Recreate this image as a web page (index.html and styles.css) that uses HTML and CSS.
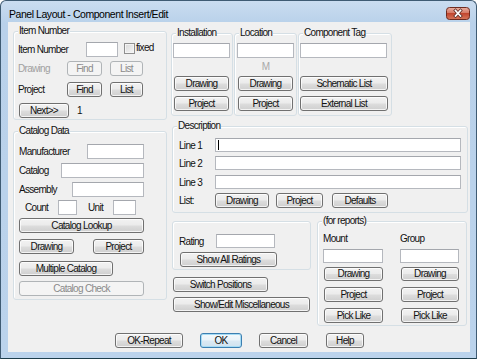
FILE: index.html
```html
<!DOCTYPE html>
<html>
<head>
<meta charset="utf-8">
<title>Panel Layout - Component Insert/Edit</title>
<link rel="stylesheet" href="styles.css">
</head>
<body>
<div class="window">
  <div class="titlebar">
    <span class="title">Panel Layout - Component Insert/Edit</span>
    <div class="close">
      <svg width="24" height="13" viewBox="0 0 24 13">
        <defs>
          <linearGradient id="cg" x1="0" y1="0" x2="0" y2="1">
            <stop offset="0" stop-color="#eab0a2"/>
            <stop offset="0.45" stop-color="#d57a66"/>
            <stop offset="0.5" stop-color="#c2462f"/>
            <stop offset="1" stop-color="#d7785c"/>
          </linearGradient>
        </defs>
        <rect x="0.5" y="0.5" width="23" height="12" rx="3" fill="url(#cg)" stroke="#6e2b20"/>
        <path d="M9.5 3.5 L14.5 9 M14.5 3.5 L9.5 9" stroke="#5a2a24" stroke-width="3.2" stroke-linecap="square"/>
        <path d="M9.5 3.5 L14.5 9 M14.5 3.5 L9.5 9" stroke="#ffffff" stroke-width="1.7" stroke-linecap="square"/>
      </svg>
    </div>
  </div>
  <div class="client">
    <div class="main">
      <div class="leftcol">
        <div class="group g-item">
          <span class="legend">Item Number</span>
          <div class="row ri1"><span class="lbl w68">Item Number</span><span class="tb w32"></span><span class="chk"></span><span class="fixed">fixed</span></div>
          <div class="row ri2"><span class="lbl dis w49">Drawing</span><button class="btn off w35">Find</button><button class="btn off w33 ml8">List</button></div>
          <div class="row ri3"><span class="lbl w49">Project</span><button class="btn w35">Find</button><button class="btn w33 ml8">List</button></div>
          <div class="row ri4"><button class="btn w50 ml1">Next&gt;&gt;</button><span class="num">1</span></div>
        </div>
        <div class="group g-cat">
          <span class="legend">Catalog Data</span>
          <div class="row rc1"><span class="lbl w68">Manufacturer</span><span class="tb w57"></span></div>
          <div class="row rc2"><span class="lbl w42">Catalog</span><span class="tb w83"></span></div>
          <div class="row rc3"><span class="lbl w53">Assembly</span><span class="tb w72"></span></div>
          <div class="row rc4"><span class="lbl w33 ml6">Count</span><span class="tb w19"></span><span class="lbl w25 ml11">Unit</span><span class="tb w23"></span></div>
          <div class="row rc5"><button class="btn w125">Catalog Lookup</button></div>
          <div class="row rc6"><button class="btn w55">Drawing</button><button class="btn w51 ml19">Project</button></div>
          <div class="row rc7"><button class="btn w94">Multiple Catalog</button></div>
          <div class="row rc8"><button class="btn off w125">Catalog Check</button></div>
        </div>
      </div>
      <div class="rightcol">
        <div class="toprow">
          <div class="group g-inst">
            <span class="legend">Installation</span>
            <div class="row rt1"><span class="tb w57"></span></div>
            <div class="mrow"></div>
            <div class="row"><button class="btn w55 ml1">Drawing</button></div>
            <div class="row rt4"><button class="btn w55 ml1">Project</button></div>
          </div>
          <div class="group g-loc">
            <span class="legend">Location</span>
            <div class="row rt1"><span class="tb w57"></span></div>
            <div class="mrow">M</div>
            <div class="row"><button class="btn w55 ml1">Drawing</button></div>
            <div class="row rt4"><button class="btn w55 ml1">Project</button></div>
          </div>
          <div class="group g-tag">
            <span class="legend">Component Tag</span>
            <div class="row rt1"><span class="tb w87"></span></div>
            <div class="mrow"></div>
            <div class="row"><button class="btn w88">Schematic List</button></div>
            <div class="row rt4"><button class="btn w88">External List</button></div>
          </div>
        </div>
        <div class="group g-desc">
          <span class="legend">Description</span>
          <div class="row rd1 h14"><span class="lbl w36">Line 1</span><span class="tb w246 h14"><span class="caret"></span></span></div>
          <div class="row rd2 h14"><span class="lbl w36">Line 2</span><span class="tb w246 h14"></span></div>
          <div class="row rd3 h14"><span class="lbl w36">Line 3</span><span class="tb w246 h14"></span></div>
          <div class="row rd4"><span class="lbl w36">List:</span><button class="btn w54">Drawing</button><button class="btn w47 ml7">Project</button><button class="btn w56 ml9">Defaults</button></div>
        </div>
        <div class="botrow">
          <div class="misccol">
            <div class="group g-rate">
              <div class="row rr1 h14"><span class="lbl w37">Rating</span><span class="tb w59 h14"></span></div>
              <div class="row rr2"><button class="btn w97 ml1">Show All Ratings</button></div>
            </div>
            <div class="row rs1"><button class="btn w95 ml1">Switch Positions</button></div>
            <div class="row rs2"><button class="btn w137 ml1">Show/Edit Miscellaneous</button></div>
          </div>
          <div class="group g-rep">
            <span class="legend">(for reports)</span>
            <div class="row rp1 h12"><span class="lbl w77">Mount</span><span class="lbl">Group</span></div>
            <div class="row rp2 h14"><span class="tb w60 h14"></span><span class="tb w59 h14 ml17"></span></div>
            <div class="row rp3 h14"><button class="btn w59 h14 ml1">Drawing</button><button class="btn w58 h14 ml18">Drawing</button></div>
            <div class="row rp4"><button class="btn w59 ml1">Project</button><button class="btn w58 ml18">Project</button></div>
            <div class="row rp5"><button class="btn w59 ml1">Pick Like</button><button class="btn w58 ml18">Pick Like</button></div>
          </div>
        </div>
      </div>
    </div>
    <div class="footer">
      <button class="btn w68">OK-Repeat</button>
      <button class="btn def w42 ml17">OK</button>
      <button class="btn w49 ml17">Cancel</button>
      <button class="btn w38 ml18">Help</button>
    </div>
  </div>
</div>
</body>
</html>
```

FILE: styles.css
```css
* { box-sizing: border-box; }
html, body { margin: 0; padding: 0; }
body {
  font-family: "Liberation Sans", Arial, sans-serif;
  font-size: 10px;
  letter-spacing: -0.7px;
  color: #111;
  background: #ffffff;
}
.window {
  width: 477px;
  height: 359px;
  border: 1px solid #3f5b73;
  border-bottom-color: #1d3d4b;
  border-radius: 6px 6px 0 0;
  background: linear-gradient(180deg, #cadcf0 0, #b9d1ea 22px, #bbd3ec 100%);
  padding: 0 6px 6px 7px;
  display: flex;
  flex-direction: column;
}
.titlebar {
  height: 21px;
  flex: none;
  position: relative;
  padding-top: 7px;
}
.title {
  display: block;
  font-size: 10.5px;
  letter-spacing: -0.45px;
  line-height: 12px;
  margin-left: 1px;
  white-space: nowrap;
  color: #000;
}
.close {
  position: absolute;
  right: 0;
  top: 6px;
  width: 24px;
  height: 13px;
}
.close svg { display: block; }
.client {
  flex: 1;
  background: #f0f0f0;
}
.main { display: flex; height: 311px; }
.leftcol { width: 154px; margin-left: 5px; padding-top: 9px; flex: none; }
.rightcol { width: 297px; margin-left: 4px; padding-top: 11px; flex: none; }

.group {
  position: relative;
  border: 1px solid #d5dfe5;
  border-radius: 3px;
  box-shadow: inset 1px 1px 0 #ffffff;
}
.legend {
  position: absolute;
  top: -7px;
  left: 4px;
  padding: 0 1px;
  line-height: 12px;
  background: #f0f0f0;
  white-space: nowrap;
}
.row { display: flex; align-items: center; height: 15px; }
.h14 { height: 14px; }
.h12 { height: 12px; }
.lbl { flex: none; white-space: nowrap; }
.dis { color: #a0a0a0; }

.tb {
  display: block;
  flex: none;
  height: 15px;
  background: #fff;
  border: 1px solid #b5b8be;
  border-top-color: #a4a7ad;
  position: relative;
}
.tb.h14 { height: 14px; }
.caret {
  position: absolute;
  left: 2px;
  top: 1px;
  width: 1px;
  height: 10px;
  background: #000;
}
.chk {
  display: block;
  flex: none;
  width: 11px;
  height: 11px;
  margin-left: 6px;
  align-self: flex-start;
  margin-top: 1px;
  border: 1px solid #8f8f8f;
  background: linear-gradient(135deg, #d9d9d9, #f6f6f6);
  box-shadow: inset 0 0 0 1px #f4f4f4;
}
.fixed { margin-left: 1px; align-self: flex-start; line-height: 12px; }
.num { margin-left: 8px; }

.btn {
  flex: none;
  display: block;
  height: 15px;
  padding: 0;
  margin: 0;
  font: inherit;
  letter-spacing: inherit;
  color: #111;
  line-height: 13px;
  text-align: center;
  white-space: nowrap;
  border: 1px solid #707070;
  border-radius: 3px;
  background: linear-gradient(180deg, #f2f2f2 0%, #ebebeb 48%, #dddddd 52%, #cfcfcf 100%);
  box-shadow: inset 0 0 0 1px rgba(255,255,255,0.75);
}
.btn.h14 { height: 14px; line-height: 12px; }
.btn.off {
  color: #8a8a8a;
  border-color: #b0b4b7;
  background: #f4f4f4;
  box-shadow: none;
}
.btn.def {
  border-color: #3c7fb1;
  background: linear-gradient(180deg, #f4f9fc 0%, #eaf3f9 48%, #dbe9f3 52%, #d0e2ef 100%);
  box-shadow: inset 0 0 0 1px #a6dcf5;
}

/* widths */
.w19 { width: 19px; } .w23 { width: 23px; } .w25 { width: 25px; }
.w32 { width: 32px; } .w33 { width: 33px; } .w35 { width: 35px; }
.w36 { width: 36px; } .w37 { width: 37px; } .w38 { width: 38px; }
.w42 { width: 42px; } .w47 { width: 47px; } .w49 { width: 49px; }
.w50 { width: 50px; } .w51 { width: 51px; } .w53 { width: 53px; }
.w54 { width: 54px; } .w55 { width: 55px; } .w56 { width: 56px; }
.w57 { width: 57px; } .w58 { width: 58px; } .w59 { width: 59px; }
.w60 { width: 60px; } .w68 { width: 68px; } .w72 { width: 72px; }
.w77 { width: 77px; } .w83 { width: 83px; } .w87 { width: 87px; }
.w88 { width: 88px; } .w94 { width: 94px; } .w95 { width: 95px; }
.w97 { width: 97px; } .w125 { width: 125px; } .w137 { width: 137px; }
.w246 { width: 246px; }
.ml1 { margin-left: 1px; } .ml6 { margin-left: 6px; } .ml7 { margin-left: 7px; }
.ml8 { margin-left: 8px; } .ml9 { margin-left: 9px; } .ml11 { margin-left: 11px; }
.ml17 { margin-left: 17px; } .ml18 { margin-left: 18px; } .ml19 { margin-left: 19px; }

/* Item Number group */
.g-item { height: 89px; padding-left: 4px; }
.ri1 { margin-top: 10px; }
.ri2 { margin-top: 4px; }
.ri3 { margin-top: 6px; }
.ri4 { margin-top: 6px; }

/* Catalog group */
.g-cat { height: 169px; margin-top: 11px; padding-left: 5px; }
.rc1 { margin-top: 12px; }
.rc2 { margin-top: 4px; }
.rc3 { margin-top: 4px; }
.rc4 { margin-top: 3px; }
.rc5 { margin-top: 3px; }
.rc6 { margin-top: 6px; }
.rc7 { margin-top: 7px; }
.rc8 { margin-top: 5px; }

/* top row */
.toprow { display: flex; height: 83px; }
.g-inst { width: 62px; padding-left: 1px; }
.g-loc { width: 63px; margin-left: 1px; padding-left: 2px; }
.g-tag { width: 94px; margin-left: 1px; padding-left: 1px; }
.rt1 { margin-top: 9px; }
.rt4 { margin-top: 5px; }
.mrow {
  height: 18px;
  line-height: 18px;
  text-align: center;
  color: #a8a8a8;
  padding-right: 2px;
}

/* description */
.g-desc { width: 296px; height: 87px; margin-top: 10px; margin-left: 1px; padding-left: 6px; }
.rd1 { margin-top: 11px; }
.rd2 { margin-top: 4px; }
.rd3 { margin-top: 5px; }
.rd4 { margin-top: 4px; }

/* bottom row */
.botrow { display: flex; margin-top: 8px; }
.misccol { width: 139px; margin-left: 1px; flex: none; }
.g-rate { height: 49px; padding-left: 6px; }
.rr1 { margin-top: 12px; }
.rr2 { margin-top: 4px; }
.rs1 { margin-top: 7px; }
.rs2 { margin-top: 5px; }
.g-rep { width: 150px; height: 105px; margin-left: 6px; padding-left: 5px; flex: none; }
.rp1 { margin-top: 10px; }
.rp2 { margin-top: 5px; }
.rp3 { margin-top: 4px; }
.rp4 { margin-top: 6px; }
.rp5 { margin-top: 6px; }

/* footer */
.footer { display: flex; height: 15px; padding-left: 107px; }
```
